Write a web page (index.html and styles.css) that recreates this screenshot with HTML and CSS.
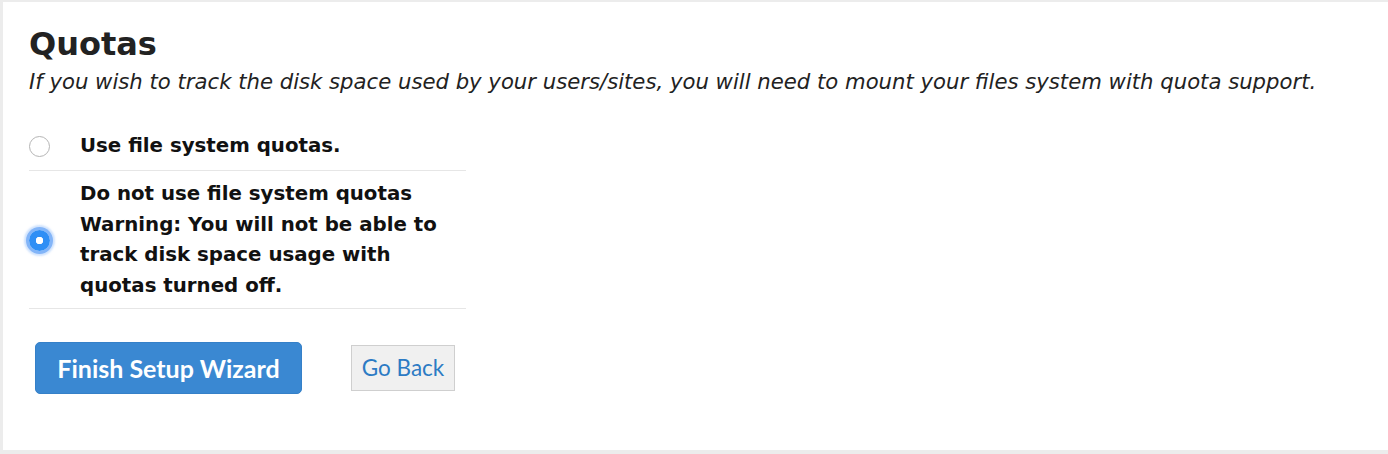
FILE: index.html
```html
<!DOCTYPE html>
<html lang="en">
<head>
<meta charset="utf-8">
<title>Quotas</title>
<link rel="stylesheet" href="styles.css">
</head>
<body>
<div class="panel">
  <h1 class="title">Quotas</h1>
  <p class="intro">If you wish to track the disk space used by your users/sites, you will need to mount your files system with quota support.</p>
  <div class="options">
    <label class="option">
      <span class="radio-col"><input type="radio" name="quota" class="radio"></span>
      <span class="option-text">Use file system quotas.</span>
    </label>
    <label class="option">
      <span class="radio-col"><input type="radio" name="quota" class="radio" checked></span>
      <span class="option-text">Do not use file system quotas Warning: You will not be able to track disk space usage with quotas turned off.</span>
    </label>
  </div>
  <div class="actions">
    <button class="btn-primary">Finish Setup Wizard</button>
    <button class="btn-secondary">Go Back</button>
  </div>
</div>
</body>
</html>
```

FILE: styles.css
```css
html, body {
  margin: 0;
  padding: 0;
}
body {
  background: #ececec;
  height: 454px;
  overflow: hidden;
}
.panel {
  margin: 2px 0 0 3px;
  height: 448px;
  background: #ffffff;
  padding: 0 26px;
  box-sizing: border-box;
  color: #222222;
}
.title {
  margin: 0;
  padding-top: 22px;
  font-family: "DejaVu Sans", sans-serif;
  font-weight: bold;
  font-size: 32px;
  line-height: 40px;
}
.intro {
  margin: 0;
  font-family: "DejaVu Sans", sans-serif;
  font-style: italic;
  font-size: 21.2px;
  line-height: 36px;
  color: #222;
}
.options {
  width: 437px;
  margin-top: 22px;
}
.option {
  display: flex;
  align-items: center;
  border-bottom: 1px solid #e6e6e6;
  font-family: "DejaVu Sans", sans-serif;
  font-weight: bold;
  font-size: 19.8px;
  line-height: 30.8px;
  color: #111;
}
.option:first-child {
  padding: 9px 0 8px;
}
.option:last-child {
  padding: 8px 0 6px;
}
.radio-col {
  width: 51px;
  flex: none;
  display: flex;
  align-items: center;
}
.radio {
  appearance: none;
  -webkit-appearance: none;
  margin: 0;
  width: 21px;
  height: 21px;
  border-radius: 50%;
  border: 1.5px solid #b5b5b5;
  background: #fff;
  box-sizing: border-box;
}
.radio:checked {
  border: none;
  background: radial-gradient(circle, #ffffff 0 3.5px, #2f8ff5 4px);
  box-shadow: 0 0 0 3px rgba(80, 150, 245, 0.6), 0 0 2px 5px rgba(120, 175, 250, 0.35);
}
.option-text {
  flex: 1;
}
.actions {
  display: flex;
  align-items: center;
  gap: 49px;
  padding: 33px 0 0 6px;
}
.btn-primary {
  font-family: Lato, sans-serif;
  font-weight: bold;
  font-size: 25px;
  color: #ffffff;
  background: #3a88d2;
  border: 1px solid #3580c8;
  border-radius: 5px;
  width: 267px;
  height: 52px;
  padding: 0;
}
.btn-secondary {
  font-family: Lato, sans-serif;
  font-size: 22.5px;
  color: #2c7bc4;
  background: #f0f0f0;
  border: 1px solid #cfcfcf;
  border-radius: 0;
  width: 104px;
  height: 46px;
  padding: 0;
}
```
